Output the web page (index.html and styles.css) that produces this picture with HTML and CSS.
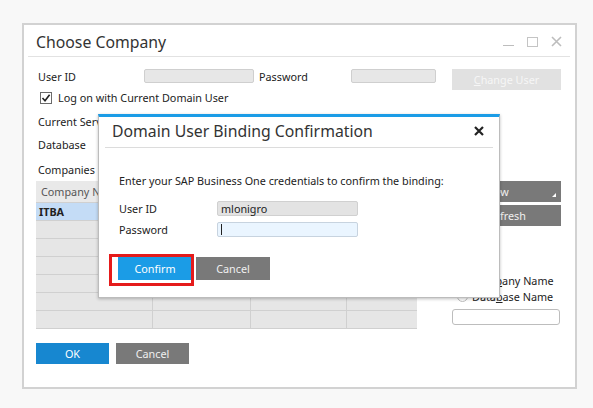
FILE: index.html
```html
<!DOCTYPE html>
<html>
<head>
<meta charset="utf-8">
<link rel="stylesheet" href="styles.css">
</head>
<body>
<div class="window">
  <div class="titlebar">
    <span class="title">Choose Company</span>
    <div class="winctl">
      <span class="ctl-min"></span>
      <span class="ctl-max"></span>
      <svg class="ctl-close" width="11" height="11" viewBox="0 0 11 11"><path d="M1 1L10 10M10 1L1 10" stroke="#bdbdbd" stroke-width="1.6" fill="none"/></svg>
    </div>
  </div>
  <div class="body">
    <div class="row row-user">
      <span class="label lw">User ID</span>
      <span class="input in1"></span>
      <span class="label lp">Password</span>
      <span class="input in2"></span>
      <span class="btn btn-light"><u>C</u>hange User</span>
    </div>
    <div class="row row-check">
      <span class="checkbox"><svg width="10" height="10" viewBox="0 0 10 10"><path d="M1.5 5L4 7.8L8.6 1.8" stroke="#222" stroke-width="1.6" fill="none"/></svg></span>
      <span class="label">Lo<u>g</u> on with Current Domain User</span>
    </div>
    <div class="row row-server">
      <span class="label lw">Current Server</span>
      <span class="input in1"></span>
      <span class="input in3"></span>
    </div>
    <div class="row row-db">
      <span class="label lw">Database</span>
      <span class="input in1"></span>
    </div>
    <div class="row row-comp">
      <span class="label">Companies</span>
    </div>
    <div class="main">
      <div class="grid">
        <div class="gr head"><span class="c c1">Company Name</span><span class="c c2"></span><span class="c c3"></span><span class="c c4"></span></div>
        <div class="gr sel"><span class="c c1 bold">ITBA</span><span class="c c2"></span><span class="c c3"></span><span class="c c4"></span></div>
        <div class="gr"><span class="c c1"></span><span class="c c2"></span><span class="c c3"></span><span class="c c4"></span></div>
        <div class="gr"><span class="c c1"></span><span class="c c2"></span><span class="c c3"></span><span class="c c4"></span></div>
        <div class="gr"><span class="c c1"></span><span class="c c2"></span><span class="c c3"></span><span class="c c4"></span></div>
        <div class="gr"><span class="c c1"></span><span class="c c2"></span><span class="c c3"></span><span class="c c4"></span></div>
        <div class="gr"><span class="c c1"></span><span class="c c2"></span><span class="c c3"></span><span class="c c4"></span></div>
        <div class="gr"><span class="c c1"></span><span class="c c2"></span><span class="c c3"></span><span class="c c4"></span></div>
      </div>
      <div class="side">
        <span class="btn btn-dark btn-new">New<span class="tri"></span></span>
        <span class="btn btn-dark btn-ref">Refresh</span>
        <div class="radios">
          <div class="radio"><span class="rc"></span><span class="label">Com<u>p</u>any Name</span></div>
          <div class="radio"><span class="rc"></span><span class="label">Data<u>b</u>ase Name</span></div>
        </div>
        <span class="search"></span>
      </div>
    </div>
    <div class="row row-btns">
      <span class="btn btn-blue">OK</span>
      <span class="btn btn-dark btn-cancel">Cancel</span>
    </div>
  </div>
</div>

<div class="dialog">
  <div class="dtitle">
    <span class="dtext">Domain User Binding Confirmation</span>
    <svg class="dclose" width="10" height="10" viewBox="0 0 10 10"><path d="M1 1L9 9M9 1L1 9" stroke="#222" stroke-width="2.2" fill="none"/></svg>
  </div>
  <div class="dbody">
    <div class="msg">Enter your SAP Business One credentials to confirm the binding:</div>
    <div class="drow"><span class="dlabel">User ID</span><span class="dinput ro">mlonigro</span></div>
    <div class="drow"><span class="dlabel">Password</span><span class="dinput act"><span class="caret"></span></span></div>
    <div class="dbtns">
      <span class="btn dbtn btn-confirm">Confirm</span>
      <span class="btn dbtn btn-dark">Cancel</span>
    </div>
  </div>
  <div class="highlight"></div>
</div>
</body>
</html>
```

FILE: styles.css
```css
* { box-sizing: border-box; }
html, body { margin: 0; padding: 0; }
body {
  width: 593px; height: 408px; overflow: hidden;
  background: #f8f8f8;
  font-family: "Noto Sans", "Open Sans", sans-serif;
  font-size: 10.8px; color: #222;
  position: relative;
  padding: 23px 0 0 22px;
}
u { text-decoration: underline; text-underline-offset: 1px; }

.window {
  width: 555px; height: 366px;
  background: #fff;
  border: 2px solid #d2d2d2;
}
.titlebar {
  height: 32px;
  margin: 0 5px 0 4px;
  border-bottom: 1px solid #e2e2e2;
  display: flex; align-items: center; justify-content: space-between;
  padding: 2px 0 0 8px;
}
.title { font-size: 15.8px; color: #333; letter-spacing: 0; }
.winctl { display: flex; align-items: center; gap: 13px; padding-right: 8px; }
.ctl-min { width: 11px; height: 9px; border-bottom: 1.6px solid #bdbdbd; }
.ctl-max { width: 11px; height: 10px; border: 1.4px solid #c4c4c4; }

.body { padding-left: 12px; }
.row { display: flex; align-items: flex-start; }
.label { line-height: 15px; white-space: nowrap; }
.lw { width: 108px; padding-left: 2px; overflow: hidden; }
.input {
  height: 14px; background: #e7e7e7;
  border: 1px solid #cfcfcf; border-radius: 2px;
}
.in1 { width: 110px; }
.in2 { width: 85px; }
.in3 { width: 178px; margin-left: 4px; }
.lp { width: 97px; padding-left: 5px; }

.row-user { margin-top: 12px; height: 21px; }
.btn {
  display: inline-flex; align-items: center; justify-content: center;
  height: 21px; white-space: nowrap;
}
.btn-light { width: 109px; margin-left: 16px; background: #e1e1e1; color: #f6f6f6; }

.row-check { margin-top: 1px; height: 13px; align-items: center; }
.checkbox {
  width: 12px; height: 12px; margin-left: 4px; margin-right: 6px;
  border: 1px solid #6a6a6a; background: #fff;
  display: flex; align-items: center; justify-content: center;
}
.row-server { margin-top: 10px; height: 15px; }
.row-db { margin-top: 8px; height: 15px; }
.row-comp { margin-top: 10px; height: 15px; padding-left: 2px; }

.main { display: flex; margin-top: 4px; }
.grid { width: 381px; display: flex; flex-direction: column; }
.gr { display: flex; height: 18px; background: #e6e6e6; border-bottom: 1px solid #d0d0d0; }
.gr.head { height: 22px; background: #e9e9e9; color: #555; }
.gr.sel .c1 { background: #c4dcf6; }
.c { border-right: 1px solid #d0d0d0; display: flex; align-items: center; padding-left: 5px; overflow: hidden; white-space: nowrap; }
.c1 { width: 117px; }
.c2 { width: 98px; }
.c3 { width: 96px; }
.c4 { width: 70px; border-right: none; }
.bold { font-weight: bold; padding-left: 3px; }

.side { margin-left: 35px; width: 109px; display: flex; flex-direction: column; }
.btn-dark { background: #797979; color: #f0f0f0; }
.btn-new { height: 21px; position: relative; padding-right: 18px; }
.btn-ref { height: 21px; margin-top: 3px; }
.tri {
  position: absolute; right: 5px; bottom: 5px;
  width: 0; height: 0;
  border-left: 4px solid transparent; border-bottom: 4px solid #fff;
}
.radios { margin-top: 47px; display: flex; flex-direction: column; gap: 1px; }
.radio { display: flex; align-items: center; height: 15px; }
.rc { width: 11px; height: 11px; border: 1px solid #bdbdbd; border-radius: 50%; margin-left: 5px; margin-right: 4px; background: #fff; }
.search { margin-top: 5px; height: 16px; width: 108px; border: 1px solid #bdbdbd; border-radius: 3px; background: #fff; }

.row-btns { margin-top: 14px; gap: 7px; }
.btn-blue { width: 73px; background: #1787d0; color: #fff; }
.btn-cancel { width: 73px; }

.dialog {
  position: absolute; left: 98px; top: 114px;
  width: 402px; height: 184px;
  background: #fff;
  border: 1px solid #bcbcbc;
  border-top: 3px solid #1b9ce6;
  box-shadow: 0 1px 3px rgba(0,0,0,0.25);
}
.dtitle {
  height: 31px; margin: 0 6px;
  border-bottom: 1px solid #dcdcdc;
  display: flex; align-items: center; justify-content: space-between;
  padding: 0 9px 2px 7px;
}
.dtext { font-size: 15.8px; color: #333; }
.dbody { padding: 25px 0 0 20px; }
.msg { line-height: 15px; }
.drow { display: flex; align-items: center; height: 15px; }
.drow:nth-of-type(2) { margin-top: 13px; }
.drow:nth-of-type(3) { margin-top: 6px; }
.dlabel { width: 98px; }
.dinput {
  width: 141px; height: 15px; border-radius: 2px;
  display: flex; align-items: center; padding-left: 3px;
}
.ro { background: #e3e3e3; border: 1px solid #d0d0d0; }
.act { background: #eaf5ff; border: 1px solid #c7d3df; }
.caret { width: 1px; height: 11px; background: #222; }
.dbtns { display: flex; gap: 4px; margin-top: 20px; margin-left: -1px; }
.dbtn { width: 74px; height: 23px; }
.btn-confirm { background: #1b9ce6; color: #fff; }
.highlight {
  position: absolute; left: 10px; top: 137px;
  width: 85px; height: 32px;
  border: 3px solid #e51b1b;
}
```
